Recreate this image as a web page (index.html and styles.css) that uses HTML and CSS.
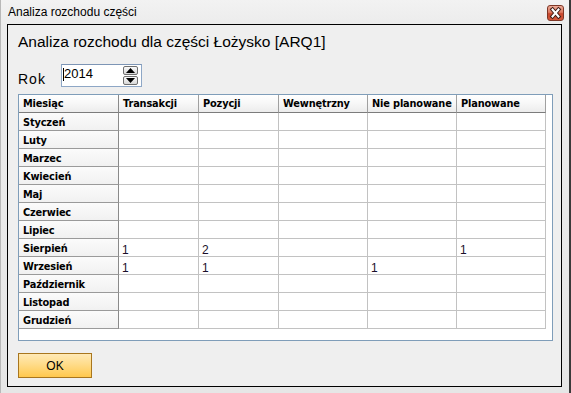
FILE: index.html
```html
<!DOCTYPE html>
<html lang="pl">
<head>
<meta charset="utf-8">
<title>Analiza rozchodu części</title>
<link rel="stylesheet" href="styles.css">
</head>
<body>
<div class="window">
  <div class="titlebar">
    <span class="title">Analiza rozchodu części</span>
    <button class="close" aria-label="Zamknij">
      <svg width="15" height="14" viewBox="0 0 15 14">
        <path d="M4.5 3.5 L10.5 10.5 M10.5 3.5 L4.5 10.5" stroke="#3a1a14" stroke-width="4" stroke-linecap="square"/>
        <path d="M4.5 3.5 L10.5 10.5 M10.5 3.5 L4.5 10.5" stroke="#ffffff" stroke-width="2" stroke-linecap="square"/>
      </svg>
    </button>
  </div>
  <div class="panel">
    <h1 class="heading">Analiza rozchodu dla części Łożysko [ARQ1]</h1>
    <div class="rok-row">
      <label class="rok-label">Rok</label>
      <div class="spin-input">
        <span class="caret"></span><span class="spin-value">2014</span>
        <div class="spin">
          <span class="spin-btn"><svg width="9" height="5" viewBox="0 0 9 5"><path d="M0 5 L4.5 0 L9 5 Z" fill="#000"/></svg></span>
          <span class="spin-btn"><svg width="9" height="5" viewBox="0 0 9 5"><path d="M0 0 L4.5 5 L9 0 Z" fill="#000"/></svg></span>
        </div>
      </div>
    </div>
    <div class="grid-box">
      <div class="grid">
        <div class="hc rh">Miesiąc</div><div class="hc">Transakcji</div><div class="hc">Pozycji</div><div class="hc">Wewnętrzny</div><div class="hc">Nie planowane</div><div class="hc">Planowane</div>
        <div class="rc">Styczeń</div><div class="dc"></div><div class="dc"></div><div class="dc"></div><div class="dc"></div><div class="dc"></div>
        <div class="rc">Luty</div><div class="dc"></div><div class="dc"></div><div class="dc"></div><div class="dc"></div><div class="dc"></div>
        <div class="rc">Marzec</div><div class="dc"></div><div class="dc"></div><div class="dc"></div><div class="dc"></div><div class="dc"></div>
        <div class="rc">Kwiecień</div><div class="dc"></div><div class="dc"></div><div class="dc"></div><div class="dc"></div><div class="dc"></div>
        <div class="rc">Maj</div><div class="dc"></div><div class="dc"></div><div class="dc"></div><div class="dc"></div><div class="dc"></div>
        <div class="rc">Czerwiec</div><div class="dc"></div><div class="dc"></div><div class="dc"></div><div class="dc"></div><div class="dc"></div>
        <div class="rc">Lipiec</div><div class="dc"></div><div class="dc"></div><div class="dc"></div><div class="dc"></div><div class="dc"></div>
        <div class="rc">Sierpień</div><div class="dc">1</div><div class="dc">2</div><div class="dc"></div><div class="dc"></div><div class="dc">1</div>
        <div class="rc">Wrzesień</div><div class="dc">1</div><div class="dc">1</div><div class="dc"></div><div class="dc">1</div><div class="dc"></div>
        <div class="rc">Październik</div><div class="dc"></div><div class="dc"></div><div class="dc"></div><div class="dc"></div><div class="dc"></div>
        <div class="rc">Listopad</div><div class="dc"></div><div class="dc"></div><div class="dc"></div><div class="dc"></div><div class="dc"></div>
        <div class="rc">Grudzień</div><div class="dc"></div><div class="dc"></div><div class="dc"></div><div class="dc"></div><div class="dc"></div>
      </div>
    </div>
    <button class="ok">OK</button>
  </div>
</div>
</body>
</html>
```

FILE: styles.css
```css
* { box-sizing: border-box; }

html, body {
  margin: 0;
  padding: 0;
}

body {
  width: 571px;
  height: 393px;
  overflow: hidden;
  font-family: "Liberation Sans", Arial, sans-serif;
  background: #e4e4e4;
}

.window {
  width: 571px;
  height: 393px;
  display: flex;
  flex-direction: column;
  padding: 0 7px 6px 6px;
  background: linear-gradient(to bottom, #f2f2f2 0, #ececec 24px, #e6e6e6 100%);
  border-right: 2px solid #3a3a3a;
  border-left: 1px solid #b8b8b8;
}

.titlebar {
  height: 24px;
  flex: none;
  display: flex;
  align-items: flex-start;
  justify-content: space-between;
  padding: 0 0 0 1px;
  margin-right: -2px;
}

.title {
  font-size: 12px;
  line-height: 14px;
  margin-top: 5px;
  color: #000;
}

.close {
  margin-top: 5px;
  width: 17px;
  height: 16px;
  padding: 0;
  border: 1px solid #7e3626;
  border-radius: 3px;
  background: linear-gradient(to bottom, #ecaa97 0%, #dd7a62 45%, #c8462c 55%, #d2583c 100%);
  display: flex;
  align-items: center;
  justify-content: center;
}

.close svg { display: block; }

.panel {
  flex: 1;
  border: 1px solid #000;
  background: #efefef;
  padding: 0 0 0 10px;
  display: flex;
  flex-direction: column;
  align-items: flex-start;
}

.heading {
  margin: 8px 0 0 0;
  font-size: 15.5px;
  line-height: 18px;
  font-weight: normal;
  color: #000;
}

.rok-row {
  margin-top: 13px;
  display: flex;
  align-items: flex-end;
}

.rok-label {
  width: 43px;
  font-size: 14px;
  letter-spacing: 1px;
  line-height: 16px;
  color: #000;
}

.spin-input {
  width: 81px;
  height: 23px;
  border: 1px solid #8ea7c6;
  border-top-color: #7d95b5;
  background: #fff;
  display: flex;
  align-items: flex-start;
  padding: 0 3px 0 1px;
}

.caret {
  width: 1px;
  height: 13px;
  margin-top: 3px;
  background: #000;
}

.spin-value {
  flex: 1;
  font-size: 13px;
  line-height: 18px;
  color: #000;
}

.spin {
  width: 15px;
  margin-top: 1px;
  display: flex;
  flex-direction: column;
  gap: 1px;
}

.spin-btn {
  height: 9px;
  border: 1px solid #6f6f6f;
  border-radius: 2px;
  background: linear-gradient(to bottom, #fafafa, #d8d8d8);
  display: flex;
  align-items: center;
  justify-content: center;
}

.spin-btn svg { display: block; }

.grid-box {
  margin-top: 7px;
  width: 535px;
  height: 247px;
  border: 1px solid #7f9db9;
  background: #fff;
}

.grid {
  display: grid;
  grid-template-columns: 100px 80px 80px 89px 89px 89px;
  grid-auto-rows: 18px;
  width: 527px;
}

.hc, .rc {
  font-family: "DejaVu Sans", Verdana, sans-serif;
  font-weight: bold;
  font-size: 9.8px;
  letter-spacing: -0.15px;
  line-height: 14px;
  color: #000;
  padding-left: 4px;
  white-space: nowrap;
  overflow: hidden;
}

.hc {
  padding-top: 2px;
  background: linear-gradient(to bottom, #ffffff 0%, #f7f7f7 50%, #ececec 100%);
  border-right: 1px solid #a0a0a0;
  border-bottom: 1px solid #7c7c7c;
}

.rc {
  padding-top: 3px;
  background: linear-gradient(to bottom, #fbfbfb, #f1f1f1);
  border-right: 1px solid #8a8a8a;
  border-bottom: 1px solid #9a9a9a;
}

.hc.rh {
  border-right-color: #8a8a8a;
}

.dc {
  font-size: 12px;
  line-height: 14px;
  padding-top: 4px;
  color: #1a0f2a;
  padding-left: 3px;
  border-right: 1px solid #c2c2c2;
  border-bottom: 1px solid #c2c2c2;
  overflow: hidden;
}

.ok {
  margin-top: 12px;
  width: 74px;
  height: 25px;
  border: 1px solid #a8761e;
  border-radius: 0;
  background: linear-gradient(to bottom, #ffe9b6 0%, #ffdc8a 45%, #ffc84e 100%);
  font-family: "Liberation Sans", Arial, sans-serif;
  font-size: 12px;
  color: #000;
  padding: 0;
}
```
